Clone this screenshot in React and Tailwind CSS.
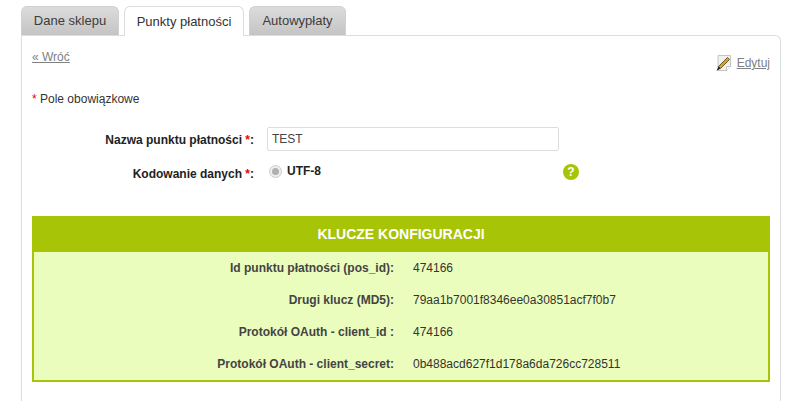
import React from "react";

const rows = [
  ["Id punktu płatności (pos_id):", "474166"],
  ["Drugi klucz (MD5):", "79aa1b7001f8346ee0a30851acf7f0b7"],
  ["Protokół OAuth - client_id :", "474166"],
  ["Protokół OAuth - client_secret:", "0b488acd627f1d178a6da726cc728511"],
];

function Tab({ label, active, className }) {
  return (
    <div
      className={`flex items-center justify-center rounded-t-[6px] border border-b-0 text-[13px] ${className} ${
        active
          ? "relative z-10 mb-[-1px] h-[30px] border-[#dddddd] bg-white text-[#333333]"
          : "h-[29px] border-[#d0d0d0] bg-gradient-to-b from-[#dcdcdc] to-[#c4c4c4] text-[#3c3c3c]"
      }`}
    >
      {label}
    </div>
  );
}

function EditIcon() {
  return (
    <svg width="17" height="18" viewBox="0 0 17 18" className="mr-[5px]">
      <path d="M3 1.5h12.5v11l-4 4H3z" fill="#f0f0f0" stroke="#c4c4c4" />
      <path d="M11.5 16.5v-4h4" fill="#ffffff" stroke="#c4c4c4" />
      <path d="M12.5 3.5l2 2-9 9-2-2z" fill="#d8a520" stroke="#4a3a10" strokeWidth="0.8" />
      <path d="M3.5 12.5l2 2-4 2.5z" fill="#222222" />
    </svg>
  );
}

export default function App() {
  return (
    <div className="h-[401px] w-[810px] overflow-hidden bg-white pl-[21px] pt-[6px] font-['Liberation_Sans',Arial,sans-serif] text-[12px] text-[#333333]">
      <div className="flex h-[29px] items-end gap-[5px]">
        <Tab label="Dane sklepu" className="w-[98px]" />
        <Tab label="Punkty płatności" active className="w-[120px]" />
        <Tab label="Autowypłaty" className="w-[97px]" />
      </div>

      <div className="h-[380px] w-[760px] rounded-tr-[6px] border border-b-0 border-[#dddddd] px-[10px]">
        <div className="flex justify-between pt-[13px]">
          <a className="text-[12px] leading-[16px] text-[#808080] underline">« Wróć</a>
          <div className="mt-[5px] flex items-center">
            <EditIcon />
            <a className="text-[12px] text-[#808080] underline">Edytuj</a>
          </div>
        </div>

        <p className="mt-[19px] leading-[16px]">
          <span className="text-[#ee0000]">*</span> Pole obowiązkowe
        </p>

        <div className="mt-[20px] flex h-[24px] items-center">
          <div className="w-[222px] pt-px text-right font-bold text-[#222222]">
            Nazwa punktu płatności <span className="text-[#ee0000]">*</span>:
          </div>
          <div className="ml-[13px] flex h-[24px] w-[292px] items-center rounded-[2px] border border-[#dddddd] pl-[4px] text-[#444444]">
            TEST
          </div>
        </div>

        <div className="mt-[11px] flex h-[24px] items-start">
          <div className="w-[222px] pt-[3px] text-right font-bold text-[#222222]">
            Kodowanie danych <span className="text-[#ee0000]">*</span>:
          </div>
          <div className="ml-[15px] mt-[3px] flex h-[13px] w-[13px] items-center justify-center rounded-full border border-[#cccccc] bg-[#eeeeee]">
            <div className="h-[7px] w-[7px] rounded-full bg-[#b0b0b0]" />
          </div>
          <div className="ml-[5px] font-bold text-[#222222]">UTF-8</div>
          <div className="ml-[242px] mt-[2px] flex h-[16px] w-[16px] items-center justify-center rounded-full bg-[#a7c406] text-[12px] font-bold text-white">
            ?
          </div>
        </div>

        <div className="mt-[30px] w-[738px] border-2 border-t-0 border-[#a7c406] bg-[#ebfdbc]">
          <div className="-mx-[2px] flex h-[36px] items-center justify-center bg-[#a7c406] text-[14px] font-bold text-white">
            KLUCZE KONFIGURACJI
          </div>
          <div>
            {rows.map(([label, value]) => (
              <div key={label} className="flex h-[32px] items-center">
                <div className="w-[360px] text-right font-bold text-[#444444]">{label}</div>
                <div className="ml-[19px] text-[#333333]">{value}</div>
              </div>
            ))}
          </div>
        </div>
      </div>
    </div>
  );
}
